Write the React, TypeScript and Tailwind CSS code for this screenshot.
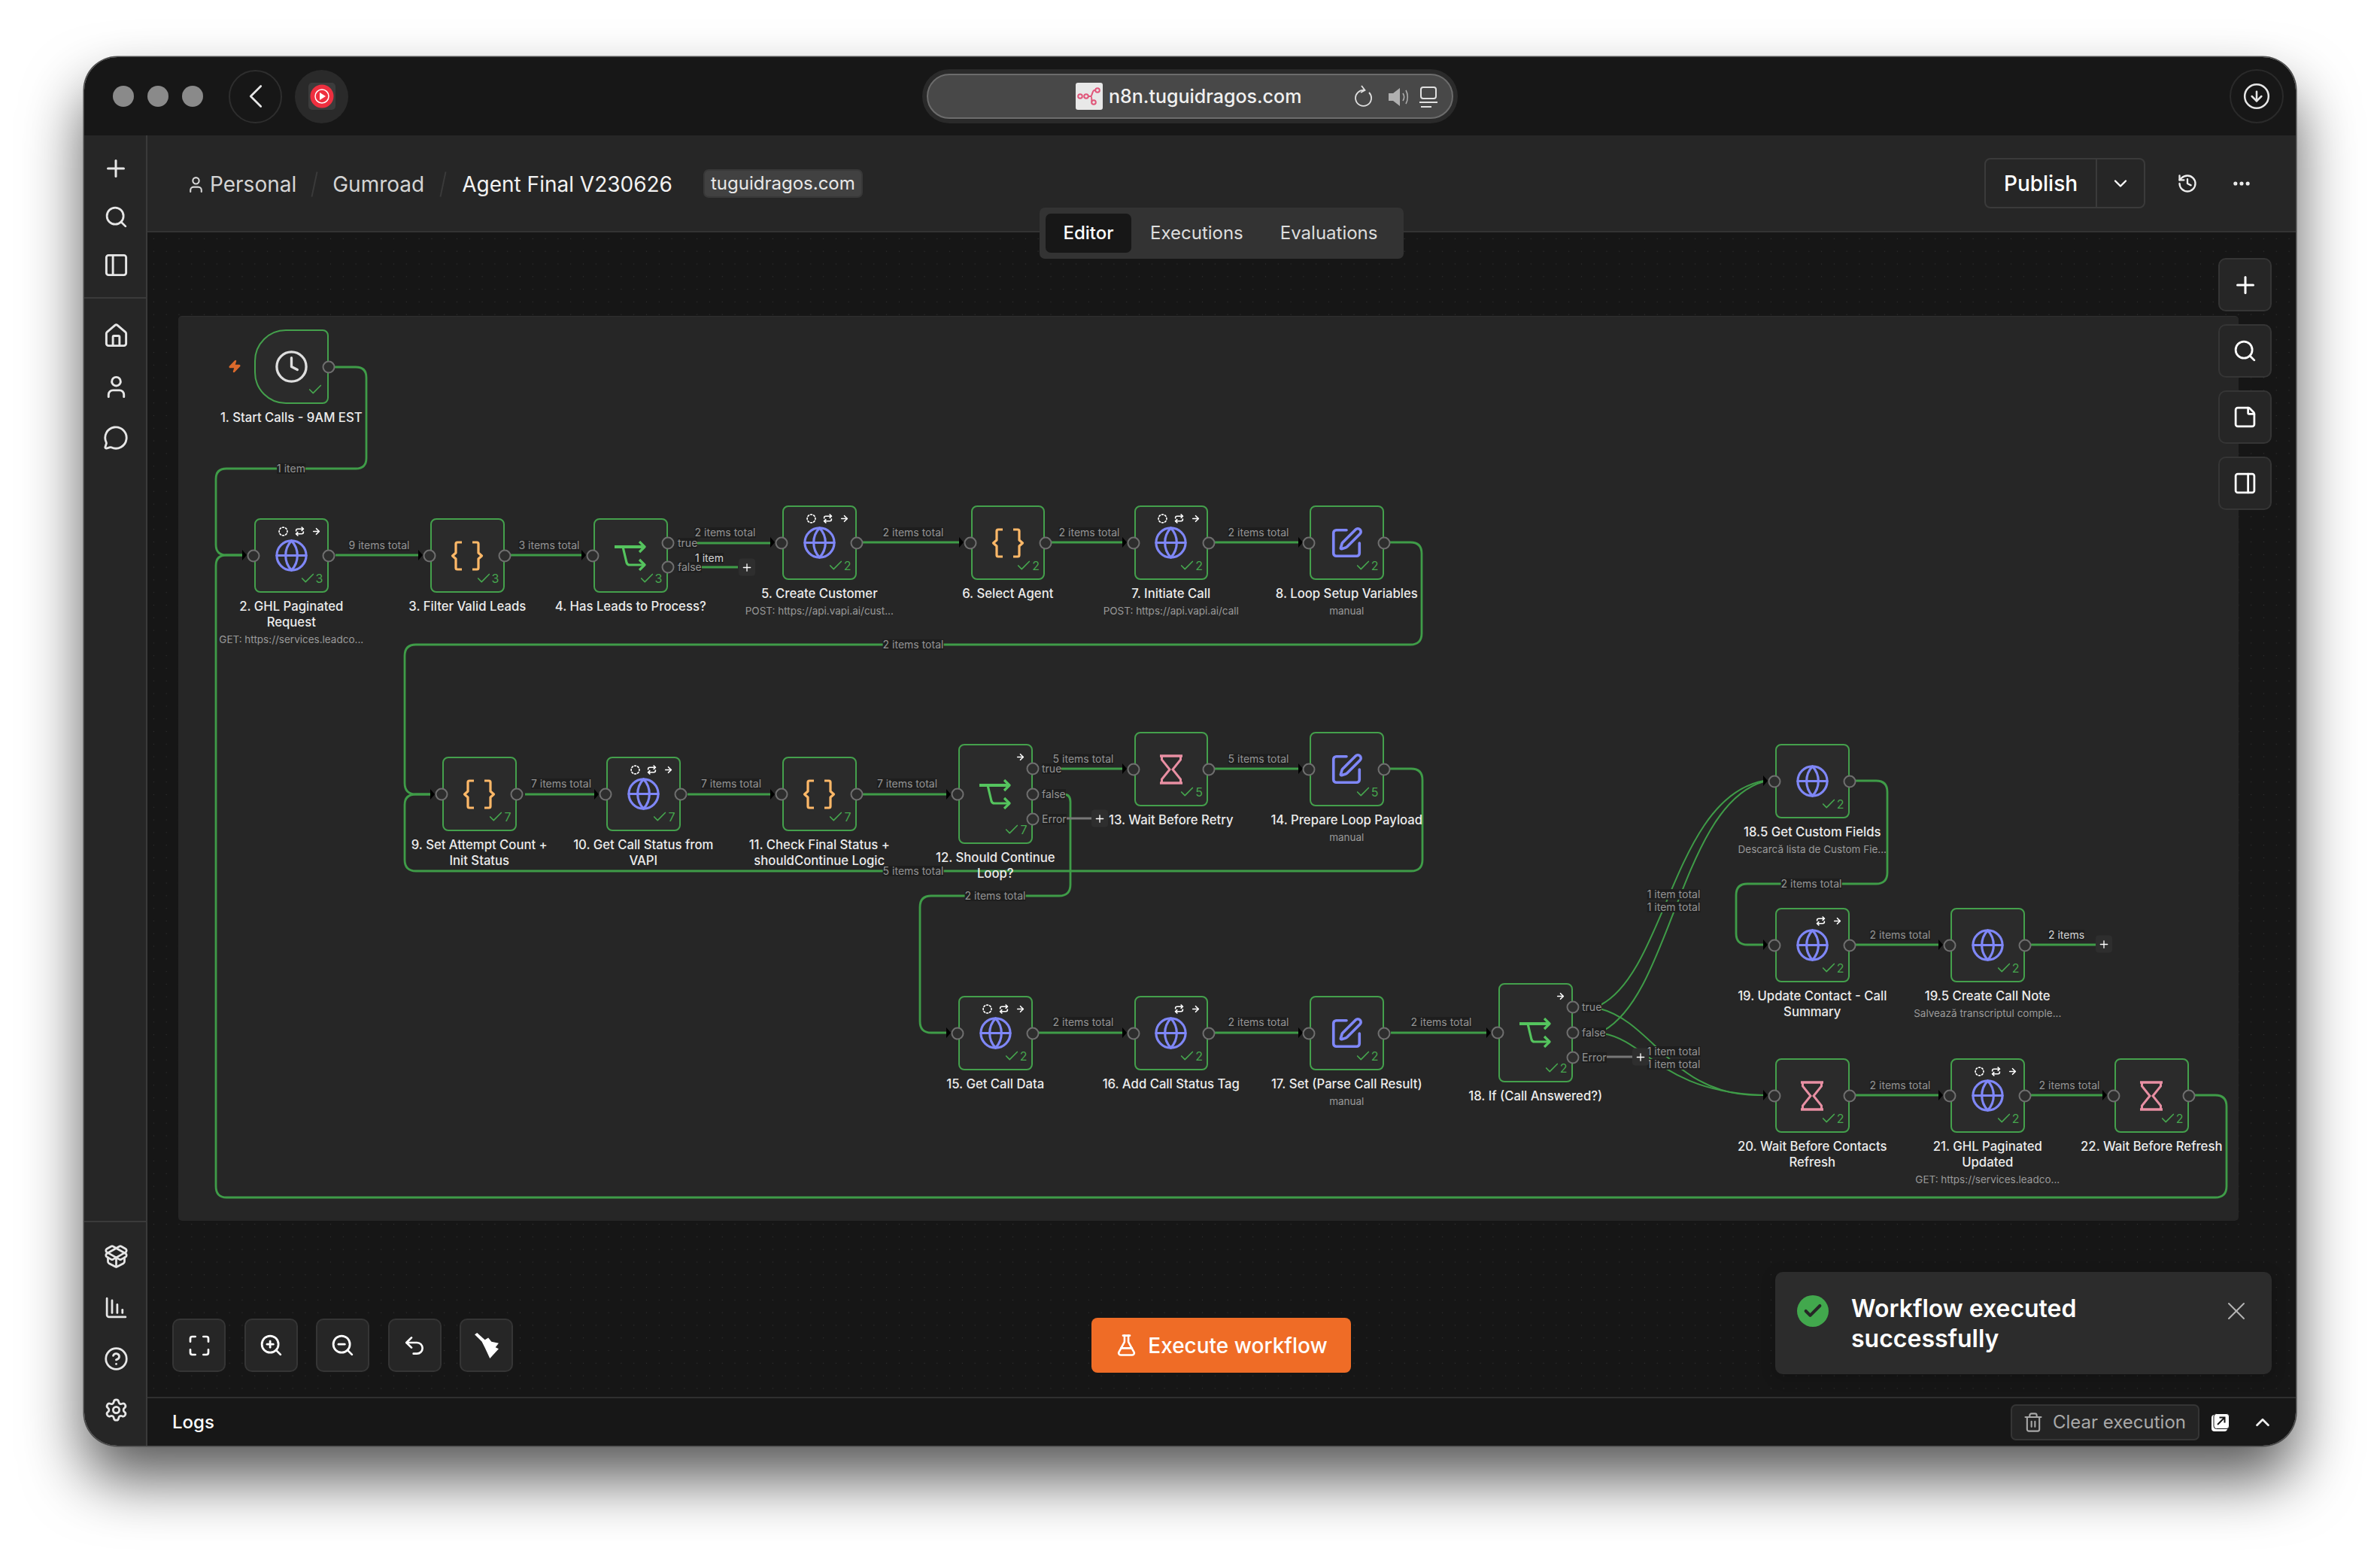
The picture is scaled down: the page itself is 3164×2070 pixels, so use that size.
import React from 'react';
import {
  ArrowRight,
  Check,
  ChartColumnDecreasing,
  ChevronDown,
  ChevronLeft,
  ChevronUp,
  CircleArrowDown,
  CircleDashed,
  CircleHelp,
  Clock,
  Ellipsis,
  FlaskConical,
  Globe,
  History,
  House,
  Maximize,
  MessageCircle,
  PackageOpen,
  PanelLeft,
  PanelRight,
  Plus,
  Repeat,
  Search,
  Settings,
  SquarePen,
  StickyNote,
  Trash2,
  Undo2,
  User,
  X,
  Zap,
  ZoomIn,
  ZoomOut,
} from 'lucide-react';

// page position of the canvas panel, all diagram data below is in page pixels
const OX = 237;
const OY = 421;
const NODE_W = 98.5;

type IconName = 'clock' | 'globe' | 'code' | 'switch' | 'edit' | 'wait';

interface NodeData {
  x: number;
  y: number;
  h?: number;
  icon: IconName;
  count?: number;
  lines: string[];
  sub?: string;
  tools?: number;
  outs?: number[];
  trigger?: boolean;
}

const NODES: NodeData[] = [
  { x: 338, y: 438, icon: 'clock', lines: ['1. Start Calls - 9AM EST'], trigger: true },
  { x: 338, y: 689, icon: 'globe', count: 3, tools: 3, lines: ['2. GHL Paginated', 'Request'], sub: 'GET: https://services.leadco...' },
  { x: 572, y: 689, icon: 'code', count: 3, lines: ['3. Filter Valid Leads'] },
  { x: 789, y: 689, icon: 'switch', count: 3, lines: ['4. Has Leads to Process?'], outs: [722, 754] },
  { x: 1040, y: 672, icon: 'globe', count: 2, tools: 3, lines: ['5. Create Customer'], sub: 'POST: https://api.vapi.ai/cust...' },
  { x: 1290.5, y: 672, icon: 'code', count: 2, lines: ['6. Select Agent'] },
  { x: 1507.5, y: 672, icon: 'globe', count: 2, tools: 3, lines: ['7. Initiate Call'], sub: 'POST: https://api.vapi.ai/call' },
  { x: 1741, y: 672, icon: 'edit', count: 2, lines: ['8. Loop Setup Variables'], sub: 'manual' },
  { x: 588, y: 1006, icon: 'code', count: 7, lines: ['9. Set Attempt Count +', 'Init Status'] },
  { x: 806, y: 1006, icon: 'globe', count: 7, tools: 3, lines: ['10. Get Call Status from', 'VAPI'] },
  { x: 1040, y: 1006, icon: 'code', count: 7, lines: ['11. Check Final Status +', 'shouldContinue Logic'] },
  { x: 1274, y: 989, h: 133, icon: 'switch', count: 7, tools: 1, lines: ['12. Should Continue', 'Loop?'], outs: [1022, 1056, 1089] },
  { x: 1507.5, y: 973, icon: 'wait', count: 5, lines: ['13. Wait Before Retry'] },
  { x: 1741, y: 973, icon: 'edit', count: 5, lines: ['14. Prepare Loop Payload'], sub: 'manual' },
  { x: 1274, y: 1324, icon: 'globe', count: 2, tools: 3, lines: ['15. Get Call Data'] },
  { x: 1507.5, y: 1324, icon: 'globe', count: 2, tools: 2, lines: ['16. Add Call Status Tag'] },
  { x: 1741, y: 1324, icon: 'edit', count: 2, lines: ['17. Set (Parse Call Result)'], sub: 'manual' },
  { x: 1992, y: 1307, h: 132, icon: 'switch', count: 2, tools: 1, lines: ['18. If (Call Answered?)'], outs: [1339, 1373, 1406] },
  { x: 2360, y: 989, icon: 'globe', count: 2, lines: ['18.5 Get Custom Fields'], sub: 'Descarcă lista de Custom Fie...' },
  { x: 2360, y: 1207, icon: 'globe', count: 2, tools: 2, lines: ['19. Update Contact - Call', 'Summary'] },
  { x: 2593, y: 1207, icon: 'globe', count: 2, lines: ['19.5 Create Call Note'], sub: 'Salvează transcriptul comple...' },
  { x: 2360, y: 1407, icon: 'wait', count: 2, lines: ['20. Wait Before Contacts', 'Refresh'] },
  { x: 2593, y: 1407, icon: 'globe', count: 2, tools: 3, lines: ['21. GHL Paginated', 'Updated'], sub: 'GET: https://services.leadco...' },
  { x: 2811, y: 1407, icon: 'wait', count: 2, lines: ['22. Wait Before Refresh'] },
];

const EDGES = [
  'M445 488H473Q487 488 487 502V609Q487 623 473 623H301Q287 623 287 637V724Q287 738 301 738H323',
  'M2917 1456H2945Q2960 1456 2960 1471V1577Q2960 1592 2945 1592H301Q287 1592 287 1577V752Q287 738 301 738H323',
  'M446 738H557',
  'M679 738H774',
  'M924 722H1025',
  'M930 754H981',
  'M1147 721H1276',
  'M1398 721H1493',
  'M1615 721H1727',
  'M1848 721H1875Q1890 721 1890 736V842Q1890 857 1875 857H553Q538 857 538 872V1041Q538 1056 553 1056H574',
  'M698 1056H792',
  'M914 1056H1026',
  'M1147 1056H1260',
  'M1409 1022H1493',
  'M1615 1022H1727',
  'M1848 1022H1876Q1891 1022 1891 1037V1143Q1891 1158 1876 1158H553Q538 1158 538 1143V1070Q538 1056 553 1056H574',
  'M1414 1056Q1423 1056 1423 1066V1176Q1423 1191 1408 1191H1238Q1223 1191 1223 1206V1358Q1223 1373 1238 1373H1260',
  'M1381 1373H1493',
  'M1615 1373H1727',
  'M1849 1373H1978',
  'M2128 1336C2215 1290 2225 1060 2345 1038',
  'M2132 1370C2222 1320 2235 1070 2345 1039',
  'M2127 1341C2200 1360 2225 1460 2345 1456',
  'M2132 1374C2190 1385 2210 1452 2345 1456',
  'M2467 1038H2494Q2509 1038 2509 1053V1160Q2509 1175 2494 1175H2323Q2308 1175 2308 1190V1241Q2308 1256 2323 1256H2346',
  'M2467 1256H2579',
  'M2700 1256H2786',
  'M2467 1456H2579',
  'M2700 1456H2797',
];

const GREY_EDGES = ['M1415 1088H1451', 'M2133 1405H2170'];

// black arrow heads that sit in front of an input handle
const ARROWS: [number, number][] = [
  [328, 738], [562, 738], [779, 738], [1030, 721], [1281, 721], [1498, 721], [1732, 721],
  [578, 1056], [796, 1056], [1030, 1056], [1264, 1056], [1498, 1022], [1732, 1022],
  [1264, 1373], [1498, 1373], [1732, 1373], [1982, 1373],
  [2350, 1038], [2350, 1256], [2583, 1256], [2350, 1456], [2583, 1456], [2801, 1456],
];

const EDGE_LABELS: { x: number; y: number; t: string; bright?: boolean }[] = [
  { x: 387, y: 623, t: '1 item' },
  { x: 504, y: 725, t: '9 items total' },
  { x: 730, y: 725, t: '3 items total' },
  { x: 964, y: 708, t: '2 items total' },
  { x: 943, y: 742, t: '1 item', bright: true },
  { x: 1214, y: 708, t: '2 items total' },
  { x: 1448, y: 708, t: '2 items total' },
  { x: 1673, y: 708, t: '2 items total' },
  { x: 1214, y: 857, t: '2 items total' },
  { x: 746, y: 1042, t: '7 items total' },
  { x: 972, y: 1042, t: '7 items total' },
  { x: 1206, y: 1042, t: '7 items total' },
  { x: 1440, y: 1009, t: '5 items total' },
  { x: 1673, y: 1009, t: '5 items total' },
  { x: 1214, y: 1158, t: '5 items total' },
  { x: 1323, y: 1191, t: '2 items total' },
  { x: 1440, y: 1359, t: '2 items total' },
  { x: 1673, y: 1359, t: '2 items total' },
  { x: 1916, y: 1359, t: '2 items total' },
  { x: 2225, y: 1189, t: '1 item total' },
  { x: 2225, y: 1206, t: '1 item total' },
  { x: 2225, y: 1398, t: '1 item total' },
  { x: 2225, y: 1415, t: '1 item total' },
  { x: 2408, y: 1175, t: '2 items total' },
  { x: 2526, y: 1243, t: '2 items total' },
  { x: 2747, y: 1243, t: '2 items', bright: true },
  { x: 2526, y: 1443, t: '2 items total' },
  { x: 2751, y: 1443, t: '2 items total' },
];

const PORT_LABELS: { x: number; y: number; t: string }[] = [
  { x: 901, y: 722, t: 'true' },
  { x: 901, y: 754, t: 'false' },
  { x: 1385, y: 1022, t: 'true' },
  { x: 1385, y: 1056, t: 'false' },
  { x: 1385, y: 1089, t: 'Error' },
  { x: 2103, y: 1339, t: 'true' },
  { x: 2103, y: 1373, t: 'false' },
  { x: 2103, y: 1406, t: 'Error' },
];

const PLUS_BUTTONS: [number, number][] = [
  [993, 754],
  [1462, 1088],
  [2181, 1405],
  [2797, 1255],
];

const CodeIcon = () => (
  <svg width="44" height="40" viewBox="0 0 44 40" fill="none" stroke="#fdb868" strokeWidth="3.2">
    <path d="M15 2H9a2 2 0 0 0-2 2v12l-4.500 4L7 24v12a2 2 0 0 0 2 2h6" strokeLinejoin="round" />
    <path d="M29 2h6a2 2 0 0 1 2 2v12l4.500 4L37 24v12a2 2 0 0 1-2 2h-6" strokeLinejoin="round" />
  </svg>
);

const SwitchIcon = () => (
  <svg width="44" height="40" viewBox="0 0 44 40" fill="none" stroke="#55c45e" strokeWidth="3.2" strokeLinejoin="round">
    <path d="M1 8H41" strokeWidth="4" />
    <path d="M34 1l7 7-7 7" />
    <path d="M12 8l5 21c.6 2 2 3 4 3H41" />
    <path d="M34 25l7 7-7 7" />
  </svg>
);

const WaitIcon = () => (
  <svg width="30" height="40" viewBox="0 0 30 40" fill="none" stroke="#e88fa3" strokeWidth="3">
    <path d="M0 2H30M0 38H30" strokeWidth="3.600" />
    <path d="M2.500 2V7L13 20 2.500 33v5M27.500 2V7L17 20l10.500 13v5" />
  </svg>
);

const NodeIcon = ({ name }: { name: IconName }) => {
  if (name === 'clock') return <Clock size={47} color="#dedede" strokeWidth={1.7} />;
  if (name === 'globe') return <Globe size={47} color="#7f87f7" strokeWidth={1.6} />;
  if (name === 'edit') return <SquarePen size={46} color="#7f87f7" strokeWidth={1.9} />;
  if (name === 'code') return <CodeIcon />;
  if (name === 'switch') return <SwitchIcon />;
  return <WaitIcon />;
};

const Handle = ({ x, y }: { x: number; y: number }) => (
  <div
    className="absolute w-[17px] h-[17px] -translate-x-1/2 -translate-y-1/2 rounded-full border-2 border-[#6f6f6f] bg-[#2e2e2e]"
    style={{ left: x - OX, top: y - OY }}
  />
);

const WorkflowNode = ({ node }: { node: NodeData }) => {
  const h = node.h ?? 99;
  const midY = node.y + h / 2;
  const outs = node.outs ?? [midY];
  return (
    <>
      <div
        className={`absolute flex items-center justify-center border-[2.5px] border-[#44a04c] bg-[#2b2b2b] ${
          node.trigger ? 'rounded-l-[42px] rounded-r-[8px]' : 'rounded-[8px]'
        }`}
        style={{ left: node.x - OX, top: node.y - OY, width: NODE_W, height: h }}
      >
        <NodeIcon name={node.icon} />
        {node.tools ? (
          <div className="absolute top-[9px] right-[8px] flex items-center gap-[9px] text-white">
            {node.tools > 2 && <CircleDashed size={13} strokeWidth={3} />}
            {node.tools > 1 && <Repeat size={13} strokeWidth={3} />}
            <ArrowRight size={13} strokeWidth={3} />
          </div>
        ) : null}
        <div className="absolute right-[5px] bottom-[6px] flex items-center text-[16px] leading-[20px] text-[#46a64e]">
          <Check size={22} strokeWidth={1.8} />
          {node.count && <span>{node.count}</span>}
        </div>
      </div>
      {!node.trigger && <Handle x={node.x - 1} y={midY} />}
      {outs.map(y => (
        <Handle key={y} x={node.x + NODE_W + 0.5} y={y} />
      ))}
      <div
        className="absolute -translate-x-1/2 text-center whitespace-nowrap"
        style={{ left: node.x + NODE_W / 2 - OX, top: node.y + h + 8 - OY }}
      >
        {node.lines.map(line => (
          <div key={line} className="text-[16.700px] leading-[21px] font-medium text-[#ececec]">
            {line}
          </div>
        ))}
        {node.sub && <div className="mt-[3px] text-[13.500px] leading-[19px] text-[#9a9a9a]">{node.sub}</div>}
      </div>
    </>
  );
};

const WorkflowCanvas = () => (
  <div className="relative ml-[41px] mt-[111px] w-[2739px] h-[1203px] rounded-[5px] border-t border-[#2e2e2e] bg-[#262626]">
    <svg className="absolute inset-0" width="2739" height="1202" viewBox={`${OX} ${OY} 2739 1202`} fill="none">
      {EDGES.map(d => (
        <path key={d} d={d} stroke="#3f9c48" strokeWidth={d.includes('C') ? 2 : 2.8} />
      ))}
      {GREY_EDGES.map(d => (
        <path key={d} d={d} stroke="#777777" strokeWidth="2.8" />
      ))}
      {ARROWS.map(([x, y]) => (
        <path key={`${x}-${y}`} d={`M${x - 6} ${y - 7}L${x} ${y}L${x - 6} ${y + 7}Z`} fill="#000000" />
      ))}
    </svg>
    {NODES.map(node => (
      <WorkflowNode key={node.lines[0]} node={node} />
    ))}
    {EDGE_LABELS.map(l => (
      <div
        key={`${l.x}-${l.y}`}
        className={`absolute -translate-x-1/2 -translate-y-1/2 whitespace-nowrap bg-[#1e1e1e] text-[14px] leading-[14px] ${
          l.bright ? 'text-[#d5d5d5]' : 'text-[#949494]'
        }`}
        style={{ left: l.x - OX, top: l.y - OY }}
      >
        {l.t}
      </div>
    ))}
    {PORT_LABELS.map(l => (
      <div
        key={`${l.x}-${l.y}`}
        className="absolute -translate-y-1/2 whitespace-nowrap bg-[#1e1e1e] text-[14px] leading-[14px] text-[#949494]"
        style={{ left: l.x - OX, top: l.y - OY }}
      >
        {l.t}
      </div>
    ))}
    {PLUS_BUTTONS.map(([x, y]) => (
      <div
        key={x}
        className="absolute flex w-[22px] h-[23px] -translate-x-1/2 -translate-y-1/2 items-center justify-center rounded-[4px] bg-[#2e2e2e] text-white"
        style={{ left: x - OX, top: y - OY }}
      >
        <Plus size={16} strokeWidth={2} />
      </div>
    ))}
    <Zap size={18} className="absolute left-[66px] top-[57px] fill-[#dc6a2c] text-[#dc6a2c]" />
  </div>
);

const ToolButton = ({ children }: { children: React.ReactNode }) => (
  <div className="flex w-[71px] h-[71px] items-center justify-center rounded-[10px] border-2 border-[#353535] bg-[#262626] text-white">
    {children}
  </div>
);

const SideIcon = ({ children }: { children: React.ReactNode }) => (
  <div className="flex h-[68px] items-center justify-center text-[#e6e6e6]">{children}</div>
);

const Sidebar = () => (
  <aside className="flex w-[84px] shrink-0 flex-col border-r-2 border-[#3a3a3a] bg-[#262626]">
    <div className="flex h-[217px] flex-col pt-[10px] pl-[2px] border-b-2 border-[#3a3a3a]">
      <div className="flex h-[68px] items-center justify-center text-[#e6e6e6]"><Plus size={36} strokeWidth={2} /></div>
      <div className="flex h-[60px] items-center justify-center text-[#e6e6e6]"><Search size={33} strokeWidth={2} /></div>
      <div className="flex h-[68px] items-center justify-center text-[#e6e6e6]"><PanelLeft size={35} strokeWidth={2} /></div>
    </div>
    <div className="pt-[15px] pl-[2px]">
      <SideIcon><House size={35} strokeWidth={2} /></SideIcon>
      <SideIcon><User size={35} strokeWidth={2} /></SideIcon>
      <SideIcon><MessageCircle size={34} strokeWidth={2} /></SideIcon>
    </div>
    <div className="mt-auto border-t-2 border-[#3a3a3a] pt-[11px] pb-[14px] pl-[2px]">
      <SideIcon><PackageOpen size={33} strokeWidth={2} /></SideIcon>
      <SideIcon><ChartColumnDecreasing size={33} strokeWidth={2} /></SideIcon>
      <SideIcon><CircleHelp size={33} strokeWidth={2} /></SideIcon>
      <SideIcon><Settings size={33} strokeWidth={2} /></SideIcon>
    </div>
  </aside>
);

const TitleBar = () => (
  <div className="flex h-[104px] shrink-0 items-center bg-[#171717] pl-[38px]">
    <div className="flex gap-[18px]">
      <div className="w-[28px] h-[28px] rounded-full bg-[#8a8a8a]" />
      <div className="w-[28px] h-[28px] rounded-full bg-[#8a8a8a]" />
      <div className="w-[28px] h-[28px] rounded-full bg-[#8a8a8a]" />
    </div>
    <div className="ml-[34px] flex w-[71px] h-[71px] items-center justify-center rounded-full border-2 border-[#2e2e2e] text-[#e6e6e6]">
      <ChevronLeft size={54} strokeWidth={1.2} />
    </div>
    <div className="ml-[17px] flex w-[71px] h-[71px] items-center justify-center rounded-full bg-[#2a2a2a]">
      <div className="flex w-[36px] h-[36px] items-center justify-center rounded-[5px] bg-[#3c3c3c]">
        <svg width="32" height="32" viewBox="0 0 32 32">
          <circle cx="16" cy="16" r="15.500" fill="#ee2f3f" />
          <circle cx="16" cy="16" r="9" fill="none" stroke="#ffffff" strokeWidth="1.500" />
          <path d="M13 11l8 5-8 5z" fill="#ffffff" />
        </svg>
      </div>
    </div>
    <div className="ml-[763px] flex w-[712px] h-[72px] items-center rounded-full bg-[#2a2a2a] p-[6px]">
      <div className="relative flex h-[60px] w-full items-center rounded-full border-2 border-[#6c6c6c] bg-[#484848] pl-[196px]">
        <div className="flex w-[36px] h-[36px] items-center justify-center rounded-[3px] bg-[#e8e8e8]">
          <svg width="32" height="26" viewBox="0 0 32 26" fill="none" stroke="#e0567a" strokeWidth="2">
            <circle cx="4" cy="13" r="2.800" />
            <circle cx="12" cy="13" r="2.800" />
            <circle cx="27" cy="5" r="2.800" />
            <circle cx="22" cy="21" r="2.800" />
            <path d="M15 13h3c2 0 2-8 5-8h1M18 13c2 0 1 8 1.500 8" />
          </svg>
        </div>
        <span className="ml-[8px] text-[25px] font-medium leading-none text-[#f0f0f0]">n8n.tuguidragos.com</span>
        <svg className="absolute left-[566px] top-[13px]" width="24" height="30" viewBox="0 0 24 30" fill="none" stroke="#e0e0e0" strokeWidth="1.800">
          <path d="M14 7A10.500 10.500 0 1 0 20 10" />
          <path d="M10 1l4.500 6-5.500 3" />
        </svg>
        <svg className="absolute left-[610px] top-[14px]" width="30" height="30" viewBox="0 0 30 30" fill="none">
          <path d="M2 10h6l9-7v24l-9-7H2z" fill="#b0b0b0" />
          <path d="M21 10c2 3 2 7 0 10M25 6c3 5 3 13 0 18" stroke="#b0b0b0" strokeWidth="1.500" />
        </svg>
        <svg className="absolute left-[652px] top-[14px]" width="26" height="30" viewBox="0 0 26 30" fill="none" stroke="#e0e0e0" strokeWidth="2">
          <rect x="3" y="2" width="20" height="15" rx="3" />
          <path d="M1 22H25M3 28H17" />
        </svg>
      </div>
    </div>
    <div className="ml-auto mr-[16px] flex w-[72px] h-[72px] items-center justify-center rounded-full border-2 border-[#2a2a2a] text-[#e6e6e6]">
      <CircleArrowDown size={38} strokeWidth={1.6} />
    </div>
  </div>
);

const Header = () => (
  <header className="flex h-[129px] shrink-0 items-center border-b-2 border-[#333333] bg-[#262626] pl-[52px]">
    <div className="flex items-center pt-[3px]">
      <User size={25} strokeWidth={2} className="text-[#d6d6d6]" />
      <span className="ml-[6px] text-[28px] leading-none text-[#d4d4d4]">Personal</span>
      <div className="mx-[23px] w-[2px] h-[34px] rotate-[12deg] bg-[#3a3a3a]" />
      <span className="text-[28px] leading-none text-[#d4d4d4]">Gumroad</span>
      <div className="mx-[24px] w-[2px] h-[34px] rotate-[12deg] bg-[#3a3a3a]" />
      <span className="text-[28px] leading-none text-[#f2f2f2]">Agent Final V230626</span>
    </div>
    <div className="ml-[41px] flex h-[38px] items-center rounded-[7px] border-2 border-[#383838] bg-[#414141] px-[8px] text-[24px] leading-none text-[#e8e8e8]">
      tuguidragos.com
    </div>
    <div className="ml-auto flex w-[214px] h-[67px] rounded-[8px] border-2 border-[#3a3a3a] text-white">
      <div className="flex w-[148px] items-center justify-center border-r-2 border-[#3a3a3a] text-[28px] font-medium pt-[1px]">Publish</div>
      <div className="flex flex-1 items-center justify-center"><ChevronDown size={28} strokeWidth={2} /></div>
    </div>
    <History size={28} strokeWidth={2} className="ml-[42px] text-[#eeeeee]" />
    <Ellipsis size={28} strokeWidth={2.4} className="ml-[44px] mr-[58px] text-[#eeeeee]" />
  </header>
);

const CanvasArea = () => (
  <main className="relative flex-1 bg-[#161616] bg-[radial-gradient(#333333_0.8px,transparent_1px)] bg-[length:16.8px_16.8px]">
    <WorkflowCanvas />

    {/* Tabs sit across the header border */}
    <div className="absolute left-[1186px] top-[-33px] flex w-[484px] h-[68px] items-center rounded-[7px] bg-[#333333] pl-[8px] text-[24px] leading-none">
      <div className="flex w-[114px] h-[52px] items-center justify-center rounded-[7px] bg-[#171717] font-medium text-white">Editor</div>
      <span className="ml-[25px] text-[#dddddd]">Executions</span>
      <span className="ml-[49px] text-[#dddddd]">Evaluations</span>
    </div>

    <div className="absolute right-[32px] top-[34px] flex flex-col gap-[17px]">
      <ToolButton><Plus size={36} strokeWidth={2} /></ToolButton>
      <ToolButton><Search size={33} strokeWidth={2} /></ToolButton>
      <ToolButton><StickyNote size={33} strokeWidth={2} /></ToolButton>
      <ToolButton><PanelRight size={33} strokeWidth={2} /></ToolButton>
    </div>

    <div className="absolute left-[33px] bottom-[33px] flex gap-[24.500px]">
      <ToolButton><Maximize size={32} strokeWidth={2} /></ToolButton>
      <ToolButton><ZoomIn size={33} strokeWidth={2} /></ToolButton>
      <ToolButton><ZoomOut size={33} strokeWidth={2} /></ToolButton>
      <ToolButton><Undo2 size={32} strokeWidth={2} /></ToolButton>
      <ToolButton>
        <svg width="36" height="34" viewBox="0 0 32 32" fill="#ffffff">
          <path d="M1 2L4 0L14 9L11 12Z" />
          <path d="M10 11L18 6L22 11L31 13L27 18L31 20L20 32L14 19Z" />
        </svg>
      </ToolButton>
    </div>

    <div className="absolute left-[1255px] bottom-[32px] flex w-[345px] h-[73px] items-center justify-center gap-[13px] rounded-[8px] bg-[#ef6c26] text-[28px] font-medium text-white">
      <FlaskConical size={31} strokeWidth={2} />
      Execute workflow
    </div>

    <div className="absolute right-[32px] bottom-[30px] w-[660px] h-[136px] rounded-[10px] bg-[#2c2c2c] shadow-[0_4px_20px_rgba(0,0,0,0.2)]">
      <div className="absolute left-[29px] top-[31px] flex w-[42px] h-[42px] items-center justify-center rounded-full bg-[#42a84d] text-[#262626]">
        <Check size={28} strokeWidth={3.500} />
      </div>
      <div className="absolute left-[101px] top-[29px] w-[400px] text-[32px] leading-[40px] font-semibold text-white">
        Workflow executed successfully
      </div>
      <X size={40} strokeWidth={1.200} className="absolute left-[593px] top-[32px] text-[#b5b5b5]" />
    </div>
  </main>
);

const LogsBar = () => (
  <footer className="flex h-[65px] shrink-0 items-center border-t-2 border-[#2f2f2f] bg-[#171717] pl-[33px]">
    <span className="text-[24px] font-medium leading-none text-white">Logs</span>
    <div className="ml-auto flex w-[251px] h-[48px] items-center gap-[12px] rounded-[7px] border-2 border-[#353535] bg-[#242424] pl-[14px] text-[24px] leading-none text-[#a8a8a8]">
      <Trash2 size={28} strokeWidth={1.800} />
      Clear execution
    </div>
    <svg className="ml-[16px]" width="24" height="24" viewBox="0 0 24 24" fill="none">
      <rect x="0" y="2" width="21" height="22" rx="4" fill="#ffffff" />
      <rect x="3" y="0.500" width="20.500" height="20" rx="3.500" fill="#ffffff" stroke="#171717" strokeWidth="1" />
      <path d="M8 15L17 6M10.500 5.500H17.500V12.500" stroke="#171717" strokeWidth="2" />
    </svg>
    <ChevronUp size={30} strokeWidth={2.200} className="ml-[29px] mr-[29px] text-[#eeeeee]" />
  </footer>
);

export default function App() {
  return (
    <div className="w-[3164px] h-[2070px] overflow-hidden bg-white pl-[112px] pt-[76px] font-[Inter,sans-serif]">
      <div className="flex w-[2940px] h-[1846px] flex-col overflow-hidden rounded-[44px] shadow-[0_0_0_1.5px_#4a4a4a,0_44px_80px_rgba(0,0,0,0.65)]">
        <TitleBar />
        <div className="flex min-h-0 flex-1">
          <Sidebar />
          <div className="flex min-w-0 flex-1 flex-col">
            <Header />
            <CanvasArea />
            <LogsBar />
          </div>
        </div>
      </div>
    </div>
  );
}
